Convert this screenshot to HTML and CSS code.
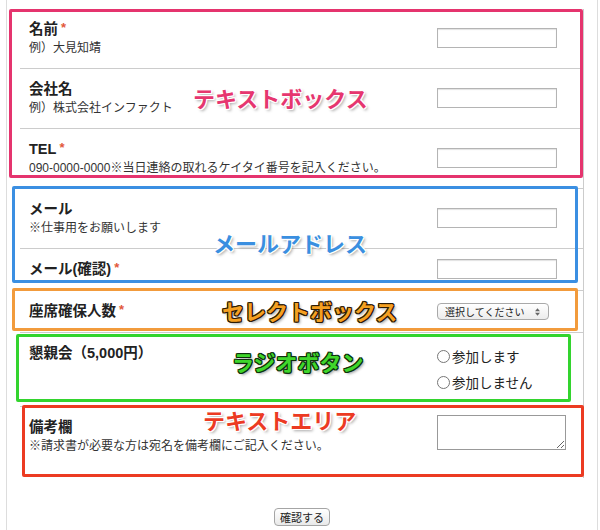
FILE: index.html
```html
<!DOCTYPE html>
<html lang="ja">

<head>
    <meta charset="UTF-8">
    <meta name="viewport" content="width=device-width, initial-scale=1.0">
    <title>お申し込みフォーム</title>
    <link rel="stylesheet" href="styles.css">
</head>

<body>
    <div class="page">
        <form class="entry-form">
            <div class="row">
                <div class="label">
                    <p class="name">名前<span class="req">*</span></p>
                    <p class="note">例）大見知靖</p>
                </div>
                <div class="control"><input type="text"></div>
            </div>
            <div class="row">
                <div class="label">
                    <p class="name">会社名</p>
                    <p class="note">例）株式会社インファクト</p>
                </div>
                <div class="control"><input type="text"></div>
            </div>
            <div class="row">
                <div class="label">
                    <p class="name">TEL<span class="req">*</span></p>
                    <p class="note">090-0000-0000※当日連絡の取れるケイタイ番号を記入ください。</p>
                </div>
                <div class="control"><input type="text"></div>
            </div>
            <div class="row">
                <div class="label">
                    <p class="name">メール</p>
                    <p class="note">※仕事用をお願いします</p>
                </div>
                <div class="control"><input type="text"></div>
            </div>
            <div class="row">
                <div class="label">
                    <p class="name">メール(確認)<span class="req">*</span></p>
                </div>
                <div class="control"><input type="text"></div>
            </div>
            <div class="row">
                <div class="label">
                    <p class="name">座席確保人数<span class="req">*</span></p>
                </div>
                <div class="control">
                    <span class="select-wrap">
                        <select>
                            <option>選択してください</option>
                            <option>1</option>
                            <option>2</option>
                        </select>
                        <svg class="arrows" width="5" height="8" viewBox="0 0 6 9">
                            <path d="M3 0 L6 3.5 H0 Z M3 9 L6 5.5 H0 Z" fill="#666" />
                        </svg>
                    </span>
                </div>
            </div>
            <div class="row row-radio">
                <div class="label">
                    <p class="name">懇親会（5,000円）</p>
                </div>
                <div class="control">
                    <label class="radio"><input type="radio" name="party">参加します</label>
                    <label class="radio"><input type="radio" name="party">参加しません</label>
                </div>
            </div>
            <div class="row row-textarea">
                <div class="label">
                    <p class="name">備考欄</p>
                    <p class="note">※請求書が必要な方は宛名を備考欄にご記入ください。</p>
                </div>
                <div class="control"><textarea></textarea></div>
            </div>
        </form>

        <div class="submit">
            <button type="button">確認する</button>
        </div>

        <!-- annotations -->
        <div class="box box-pink"></div>
        <div class="box box-blue"></div>
        <div class="box box-orange"></div>
        <div class="box box-green"></div>
        <div class="box box-red"></div>

        <span class="tag tag-pink">テキストボックス</span>
        <span class="tag tag-blue">メールアドレス</span>
        <span class="tag tag-orange">セレクトボックス</span>
        <span class="tag tag-green">ラジオボタン</span>
        <span class="tag tag-red">テキストエリア</span>
    </div>
</body>

</html>
```

FILE: styles.css
```css
body {
    margin: 0;
    background-color: #fff;
    color: #222;
    font-family: "Liberation Sans", "Noto Sans CJK JP", sans-serif;
}

.page {
    position: relative;
    margin-left: 6px;
    width: 592px;
    height: 530px;
    box-sizing: border-box;
    border-left: 1px solid #ddd;
    border-right: 1px solid #ddd;
    overflow: hidden;
}

.entry-form {
    margin: 9px 0 0 13px;
    width: 563px;
    border-right: 1px solid #ccc;
}

.row {
    display: grid;
    grid-template-columns: 408px 1fr;
    align-items: center;
    padding: 10px 0 11px 9px;
    border-bottom: 1px solid #ccc;
}

.row p {
    margin: 0;
    white-space: nowrap;
}

.name {
    height: 20px;
    font-size: 14.5px;
    font-weight: bold;
    line-height: 20px;
    color: #222;
}

.note {
    height: 18px;
    font-size: 12px;
    line-height: 18px;
    color: #333;
}

.req {
    margin-left: 3px;
    font-size: 13px;
    line-height: 0;
    color: #e2583a;
    vertical-align: 2px;
}

.control {
    display: flex;
    flex-direction: column;
    align-items: flex-start;
}

input[type="text"] {
    display: block;
    width: 120px;
    height: 20px;
    box-sizing: border-box;
    margin: 0;
    border: 1px solid #b4b4b4;
    box-shadow: inset 0 1px 1px rgba(0, 0, 0, 0.12);
    background-color: #fff;
}

.select-wrap {
    position: relative;
    display: block;
    height: 17px;
}

select {
    appearance: none;
    -webkit-appearance: none;
    display: block;
    width: 112px;
    height: 17px;
    margin: 0;
    padding: 0 0 0 7px;
    font-family: "Noto Sans CJK JP", sans-serif;
    font-size: 10px;
    line-height: 15px;
    color: #222;
    border: 1px solid #a9a9a9;
    border-radius: 4px;
    background: linear-gradient(#fff, #ececec);
}

.arrows {
    position: absolute;
    right: 9px;
    top: 5px;
    pointer-events: none;
}

.row-radio .label {
    align-self: start;
}

.radio {
    display: flex;
    align-items: center;
    height: 26px;
    font-family: "Noto Sans CJK JP", sans-serif;
    font-size: 13.5px;
    color: #222;
}

.radio input {
    width: 13px;
    height: 13px;
    margin: 0 2px 0 0;
}

.row-textarea {
    padding-bottom: 23px;
    border-bottom: none;
}

.row-textarea .control {
    align-self: start;
}

textarea {
    display: block;
    width: 129px;
    height: 35px;
    box-sizing: border-box;
    margin: -2px 0 0;
    border: 1px solid #999;
}

.submit {
    margin-top: 30px;
    text-align: center;
}

.submit button {
    height: 18px;
    padding: 0 5px;
    font-family: "Noto Sans CJK JP", sans-serif;
    font-size: 11px;
    line-height: 16px;
    color: #222;
    border: 1px solid #a5a5a5;
    border-radius: 4px;
    background: linear-gradient(#fff, #e9e9e9);
}

/* annotation frames */
.box {
    position: absolute;
    box-sizing: border-box;
    border: 3px solid;
    border-radius: 2px;
}

.box-pink {
    left: 2px;
    top: 9px;
    width: 574px;
    height: 169px;
    border-color: #e5346e;
}

.box-blue {
    left: 5px;
    top: 186px;
    width: 566px;
    height: 97px;
    border-color: #3b8fe2;
}

.box-orange {
    left: 5px;
    top: 288px;
    width: 566px;
    height: 43px;
    border-color: #f29b3c;
}

.box-green {
    left: 9px;
    top: 334px;
    width: 555px;
    height: 68px;
    border-color: #33d42e;
}

.box-red {
    left: 15px;
    top: 405px;
    width: 562px;
    height: 72px;
    border-color: #ec3b22;
}

.tag {
    position: absolute;
    font-family: "Noto Sans CJK JP", sans-serif;
    font-size: 22px;
    font-weight: bold;
    line-height: 22px;
    white-space: nowrap;
}

.tag-pink,
.tag-blue,
.tag-red {
    text-shadow: 1px 0 0 #fff, -1px 0 0 #fff, 0 1px 0 #fff, 0 -1px 0 #fff,
        1px 1px 0 #fff, -1px -1px 0 #fff, 1px -1px 0 #fff, -1px 1px 0 #fff,
        2px 2px 3px rgba(0, 0, 0, 0.35);
}

.tag-orange {
    text-shadow: 1px 0 0 #2b1a04, -1px 0 0 #2b1a04, 0 1px 0 #2b1a04, 0 -1px 0 #2b1a04,
        1px 1px 0 #2b1a04, -1px -1px 0 #2b1a04, 1px -1px 0 #2b1a04, -1px 1px 0 #2b1a04,
        2px 2px 3px rgba(0, 0, 0, 0.4);
}

.tag-pink {
    left: 186px;
    top: 86px;
    color: #e6366f;
}

.tag-blue {
    left: 206px;
    top: 231px;
    color: #3a8fe0;
}

.tag-orange {
    left: 215px;
    top: 299px;
    color: #f5a021;
}

.tag-green {
    left: 225px;
    top: 350px;
    color: #3fd62b;
    text-shadow: 1px 0 0 #0d300c, -1px 0 0 #0d300c, 0 1px 0 #0d300c, 0 -1px 0 #0d300c,
        1px 1px 0 #0d300c, -1px -1px 0 #0d300c, 1px -1px 0 #0d300c, -1px 1px 0 #0d300c,
        2px 2px 3px rgba(0, 0, 0, 0.4);
}

.tag-red {
    left: 196px;
    top: 408px;
    color: #ec3a22;
}
```
